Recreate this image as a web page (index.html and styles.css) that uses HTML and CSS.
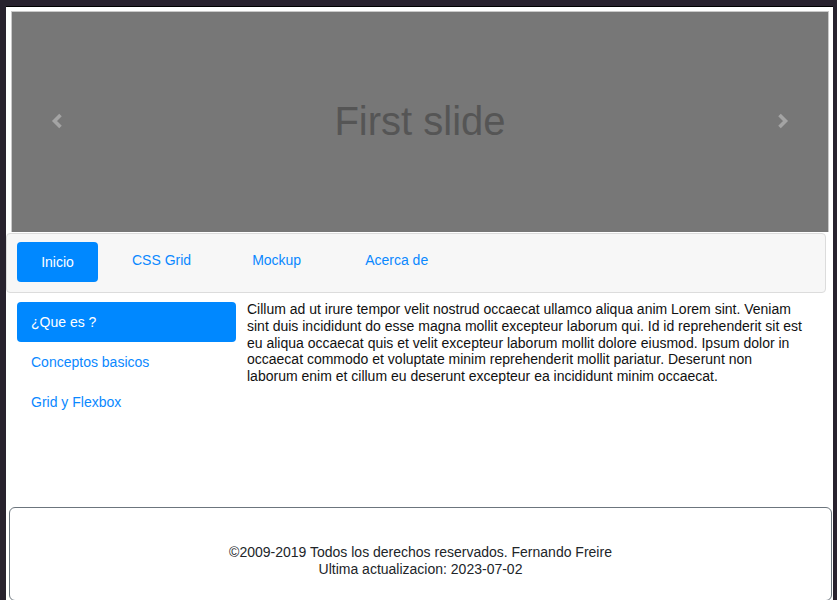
FILE: index.html
```html
<!DOCTYPE html>
<html lang="es">
<head>
<meta charset="utf-8">
<title>CSS Grid</title>
<link rel="stylesheet" href="styles.css">
</head>
<body>
<div class="page">
  <div class="carousel">
    <span class="slide-title">First slide</span>
    <span class="ctrl ctrl-prev"><svg width="12" height="16" viewBox="0 0 12 16"><path d="M9.5 2 L3.5 8 L9.5 14" fill="none" stroke="#a4a4a4" stroke-width="3.6"/></svg></span>
    <span class="ctrl ctrl-next"><svg width="12" height="16" viewBox="0 0 12 16"><path d="M2.5 2 L8.5 8 L2.5 14" fill="none" stroke="#a4a4a4" stroke-width="3.6"/></svg></span>
  </div>
  <nav class="nav">
    <a class="nav-link active">Inicio</a>
    <a class="nav-link">CSS Grid</a>
    <a class="nav-link">Mockup</a>
    <a class="nav-link nav-last">Acerca de</a>
  </nav>
  <div class="content">
    <ul class="side">
      <li class="side-item active">¿Que es ?</li>
      <li class="side-item">Conceptos basicos</li>
      <li class="side-item">Grid y Flexbox</li>
    </ul>
    <p class="text">Cillum ad ut irure tempor velit nostrud occaecat ullamco aliqua anim Lorem sint. Veniam sint duis incididunt do esse magna mollit excepteur laborum qui. Id id reprehenderit sit est eu aliqua occaecat quis et velit excepteur laborum mollit dolore eiusmod. Ipsum dolor in occaecat commodo et voluptate minim reprehenderit mollit pariatur. Deserunt non laborum enim et cillum eu deserunt excepteur ea incididunt minim occaecat.</p>
  </div>
  <footer class="footer">
    <div>©2009-2019 Todos los derechos reservados. Fernando Freire</div>
    <div>Ultima actualizacion: 2023-07-02</div>
  </footer>
</div>
</body>
</html>
```
FILE: styles.css
```css
html, body {
  margin: 0;
  padding: 0;
  height: 100%;
}
body {
  background: #28222e;
  font-family: "Liberation Sans", Arial, sans-serif;
  font-size: 14px;
  color: #212529;
  overflow: hidden;
}
.page {
  margin: 6px 4px 0 6px;
  background: #fff;
  padding-top: 4px;
  min-height: 600px;
  box-sizing: border-box;
  border-top: 1px solid #000;
}
.carousel {
  position: relative;
  margin: 0 4px 0 5px;
  height: 221px;
  box-sizing: border-box;
  border: 1px solid #c9c9c9;
  border-bottom: none;
  background: #777;
  display: flex;
  align-items: center;
  justify-content: center;
}
.slide-title {
  font-size: 40px;
  color: #555;
  line-height: 1;
  margin-top: -3px;
}
.ctrl {
  position: absolute;
  top: 101px;
  display: block;
  line-height: 0;
}
.ctrl-prev { left: 39px; }
.ctrl-next { right: 39px; }
.nav {
  margin: 1px 7px 0 0;
  height: 60px;
  box-sizing: border-box;
  border: 1px solid #dcdcdc;
  border-radius: 4px;
  background: #f7f7f7;
  padding: 8px 10px;
  display: flex;
  align-items: flex-start;
  gap: 13px;
}
.nav-link {
  display: block;
  padding: 9px 24px;
  line-height: 18px;
  color: #0a88ff;
  border-radius: 4px;
}
.nav-link.active {
  background: #0088ff;
  color: #fff;
  padding: 11px 24px;
  width: 33px;
  text-align: center;
  margin-right: -3px;
}
.nav-link.nav-last {
  margin-left: 3px;
}
.content {
  display: flex;
  margin-top: 9px;
  height: 205px;
}
.side {
  list-style: none;
  margin: 0 0 0 11px;
  padding: 0;
  width: 219px;
  flex: none;
}
.side-item {
  height: 40px;
  line-height: 40px;
  padding-left: 14px;
  color: #0a88ff;
  border-radius: 4px;
}
.side-item.active {
  background: #0088ff;
  color: #fff;
}
.text {
  margin: -1px 28px 0 11px;
  line-height: 16.8px;
  color: #111;
}
.footer {
  margin: 0 1px 0 3px;
  height: 94px;
  box-sizing: border-box;
  border: 1px solid #6c757d;
  border-radius: 6px;
  padding-top: 36px;
  text-align: center;
  line-height: 17px;
  color: #212529;
}
```
